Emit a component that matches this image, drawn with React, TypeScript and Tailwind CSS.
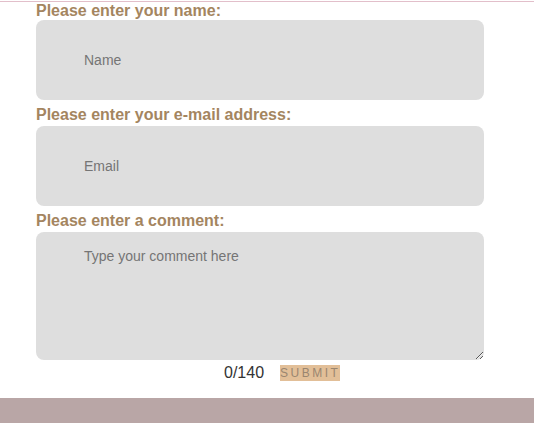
import { useState } from "react";

function App() {
  const [comment, setComment] = useState("");

  return (
    <div className="min-h-screen bg-white font-['Liberation_Sans',Arial,sans-serif]">
      <div className="h-px bg-white" />
      <div className="h-px bg-[#e2bfca]" />

      <form className="pl-[36px] w-[484px]" onSubmit={(e) => e.preventDefault()}>
        <label className="block text-[16px] leading-[18px] font-bold text-[#a4855f]">
          Please enter your name:
        </label>
        <input
          type="text"
          placeholder="Name"
          className="block w-[448px] h-[80px] rounded-[8px] bg-[#dedede] pl-[48px] text-[14px] text-[#333] placeholder:text-[#757575] outline-none"
        />

        <label className="block mt-[4px] pt-[2px] text-[16px] leading-[18px] font-bold text-[#a4855f] mb-[2px]">
          Please enter your e-mail address:
        </label>
        <input
          type="email"
          placeholder="Email"
          className="block w-[448px] h-[80px] rounded-[8px] bg-[#dedede] pl-[48px] text-[14px] text-[#333] placeholder:text-[#757575] outline-none"
        />

        <label className="block mt-[4px] pt-[2px] text-[16px] leading-[18px] font-bold text-[#a4855f] mb-[2px]">
          Please enter a comment:
        </label>
        <textarea
          placeholder="Type your comment here"
          maxLength={140}
          value={comment}
          onChange={(e) => setComment(e.target.value)}
          className="block w-[448px] h-[128px] rounded-[8px] bg-[#dedede] pl-[48px] pt-[16px] text-[14px] leading-[16px] text-[#333] placeholder:text-[#757575] outline-none"
        />

        <div className="flex items-center h-[16px] mt-[5px] pl-[188px]">
          <span className="text-[16px] leading-[16px] text-[#333]">
            {comment.length}/140
          </span>
          <button
            type="submit"
            className="ml-[16px] w-[60px] h-[16px] bg-[#e2bf98] text-[12px] leading-[16px] tracking-[2.5px] text-[#9a8670] text-center"
          >
            SUBMIT
          </button>
        </div>
      </form>

      <div className="mt-[17px] h-[26px] bg-[#b9a6a6]" />
    </div>
  );
}

export default App;
